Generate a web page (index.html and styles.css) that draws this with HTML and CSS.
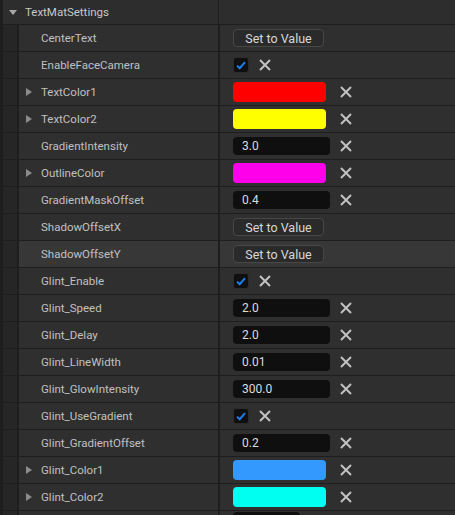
FILE: index.html
```html
<!DOCTYPE html>
<html lang="en">
<head>
  <meta charset="UTF-8">
  <title>TextMatSettings</title>
  <link rel="stylesheet" href="styles.css">
</head>
<body>
  <div class="panel">
    <div class="header">
      <div class="header-name"><span class="caret-down"></span>TextMatSettings</div>
      <div class="header-value"></div>
    </div>

    <div class="row">
      <div class="strip"></div>
      <div class="name"><span class="spacer"></span>CenterText</div>
      <div class="value"><button class="set-btn">Set to Value</button></div>
    </div>

    <div class="row">
      <div class="strip"></div>
      <div class="name"><span class="spacer"></span>EnableFaceCamera</div>
      <div class="value">
        <span class="check"><svg width="16" height="16" viewBox="0 0 16 16"><path d="M4 8.6L6.7 11.2L12 5.2" fill="none" stroke="#1f7fe8" stroke-width="2"/></svg></span>
        <span class="reset near"><svg width="12" height="12" viewBox="0 0 12 12"><path d="M1 1L11 11M11 1L1 11" stroke="#c2c2c2" stroke-width="2"/></svg></span>
      </div>
    </div>

    <div class="row">
      <div class="strip"></div>
      <div class="name"><span class="spacer"><span class="caret-right"></span></span>TextColor1</div>
      <div class="value">
        <span class="slot"><span class="swatch red"></span></span>
        <span class="reset"><svg width="12" height="12" viewBox="0 0 12 12"><path d="M1 1L11 11M11 1L1 11" stroke="#c2c2c2" stroke-width="2"/></svg></span>
      </div>
    </div>

    <div class="row">
      <div class="strip"></div>
      <div class="name"><span class="spacer"><span class="caret-right"></span></span>TextColor2</div>
      <div class="value">
        <span class="slot"><span class="swatch yellow"></span></span>
        <span class="reset"><svg width="12" height="12" viewBox="0 0 12 12"><path d="M1 1L11 11M11 1L1 11" stroke="#c2c2c2" stroke-width="2"/></svg></span>
      </div>
    </div>

    <div class="row">
      <div class="strip"></div>
      <div class="name"><span class="spacer"></span>GradientIntensity</div>
      <div class="value">
        <span class="slot"><span class="num">3.0</span></span>
        <span class="reset"><svg width="12" height="12" viewBox="0 0 12 12"><path d="M1 1L11 11M11 1L1 11" stroke="#c2c2c2" stroke-width="2"/></svg></span>
      </div>
    </div>

    <div class="row">
      <div class="strip"></div>
      <div class="name"><span class="spacer"><span class="caret-right"></span></span>OutlineColor</div>
      <div class="value">
        <span class="slot"><span class="swatch magenta"></span></span>
        <span class="reset"><svg width="12" height="12" viewBox="0 0 12 12"><path d="M1 1L11 11M11 1L1 11" stroke="#c2c2c2" stroke-width="2"/></svg></span>
      </div>
    </div>

    <div class="row">
      <div class="strip"></div>
      <div class="name"><span class="spacer"></span>GradientMaskOffset</div>
      <div class="value">
        <span class="slot"><span class="num">0.4</span></span>
        <span class="reset"><svg width="12" height="12" viewBox="0 0 12 12"><path d="M1 1L11 11M11 1L1 11" stroke="#c2c2c2" stroke-width="2"/></svg></span>
      </div>
    </div>

    <div class="row">
      <div class="strip"></div>
      <div class="name"><span class="spacer"></span>ShadowOffsetX</div>
      <div class="value"><button class="set-btn">Set to Value</button></div>
    </div>

    <div class="row hover">
      <div class="strip"></div>
      <div class="name"><span class="spacer"></span>ShadowOffsetY</div>
      <div class="value"><button class="set-btn">Set to Value</button></div>
    </div>

    <div class="row">
      <div class="strip"></div>
      <div class="name"><span class="spacer"></span>Glint_Enable</div>
      <div class="value">
        <span class="check"><svg width="16" height="16" viewBox="0 0 16 16"><path d="M4 8.6L6.7 11.2L12 5.2" fill="none" stroke="#1f7fe8" stroke-width="2"/></svg></span>
        <span class="reset near"><svg width="12" height="12" viewBox="0 0 12 12"><path d="M1 1L11 11M11 1L1 11" stroke="#c2c2c2" stroke-width="2"/></svg></span>
      </div>
    </div>

    <div class="row">
      <div class="strip"></div>
      <div class="name"><span class="spacer"></span>Glint_Speed</div>
      <div class="value">
        <span class="slot"><span class="num">2.0</span></span>
        <span class="reset"><svg width="12" height="12" viewBox="0 0 12 12"><path d="M1 1L11 11M11 1L1 11" stroke="#c2c2c2" stroke-width="2"/></svg></span>
      </div>
    </div>

    <div class="row">
      <div class="strip"></div>
      <div class="name"><span class="spacer"></span>Glint_Delay</div>
      <div class="value">
        <span class="slot"><span class="num">2.0</span></span>
        <span class="reset"><svg width="12" height="12" viewBox="0 0 12 12"><path d="M1 1L11 11M11 1L1 11" stroke="#c2c2c2" stroke-width="2"/></svg></span>
      </div>
    </div>

    <div class="row">
      <div class="strip"></div>
      <div class="name"><span class="spacer"></span>Glint_LineWidth</div>
      <div class="value">
        <span class="slot"><span class="num">0.01</span></span>
        <span class="reset"><svg width="12" height="12" viewBox="0 0 12 12"><path d="M1 1L11 11M11 1L1 11" stroke="#c2c2c2" stroke-width="2"/></svg></span>
      </div>
    </div>

    <div class="row">
      <div class="strip"></div>
      <div class="name"><span class="spacer"></span>Glint_GlowIntensity</div>
      <div class="value">
        <span class="slot"><span class="num">300.0</span></span>
        <span class="reset"><svg width="12" height="12" viewBox="0 0 12 12"><path d="M1 1L11 11M11 1L1 11" stroke="#c2c2c2" stroke-width="2"/></svg></span>
      </div>
    </div>

    <div class="row">
      <div class="strip"></div>
      <div class="name"><span class="spacer"></span>Glint_UseGradient</div>
      <div class="value">
        <span class="check"><svg width="16" height="16" viewBox="0 0 16 16"><path d="M4 8.6L6.7 11.2L12 5.2" fill="none" stroke="#1f7fe8" stroke-width="2"/></svg></span>
        <span class="reset near"><svg width="12" height="12" viewBox="0 0 12 12"><path d="M1 1L11 11M11 1L1 11" stroke="#c2c2c2" stroke-width="2"/></svg></span>
      </div>
    </div>

    <div class="row">
      <div class="strip"></div>
      <div class="name"><span class="spacer"></span>Glint_GradientOffset</div>
      <div class="value">
        <span class="slot"><span class="num">0.2</span></span>
        <span class="reset"><svg width="12" height="12" viewBox="0 0 12 12"><path d="M1 1L11 11M11 1L1 11" stroke="#c2c2c2" stroke-width="2"/></svg></span>
      </div>
    </div>

    <div class="row">
      <div class="strip"></div>
      <div class="name"><span class="spacer"><span class="caret-right"></span></span>Glint_Color1</div>
      <div class="value">
        <span class="slot"><span class="swatch blue"></span></span>
        <span class="reset"><svg width="12" height="12" viewBox="0 0 12 12"><path d="M1 1L11 11M11 1L1 11" stroke="#c2c2c2" stroke-width="2"/></svg></span>
      </div>
    </div>

    <div class="row">
      <div class="strip"></div>
      <div class="name"><span class="spacer"><span class="caret-right"></span></span>Glint_Color2</div>
      <div class="value">
        <span class="slot"><span class="swatch cyan"></span></span>
        <span class="reset"><svg width="12" height="12" viewBox="0 0 12 12"><path d="M1 1L11 11M11 1L1 11" stroke="#c2c2c2" stroke-width="2"/></svg></span>
      </div>
    </div>

    <div class="row partial">
      <div class="strip"></div>
      <div class="name"></div>
      <div class="value"><span class="num short"></span></div>
    </div>
  </div>
</body>
</html>
```

FILE: styles.css
```css
html, body {
  margin: 0;
  padding: 0;
  height: 100%;
  overflow: hidden;
  background-color: #1e1e1e;
}

body {
  font-family: Roboto, "Liberation Sans", sans-serif;
  font-size: 11.5px;
  color: #c0c0c0;
}

.panel {
  display: flex;
  flex-direction: column;
  gap: 1px;
  padding-left: 3px;
}

/* category header */
.header {
  display: grid;
  grid-template-columns: 215px 1fr;
  column-gap: 1px;
  height: 24px;
}

.header-name,
.header-value {
  background-color: #2d2d2d;
}

.header-name {
  display: flex;
  align-items: center;
  padding-left: 6px;
  color: #c8c8c8;
}

.caret-down {
  width: 0;
  height: 0;
  border-left: 4px solid transparent;
  border-right: 4px solid transparent;
  border-top: 5px solid #a8a8a8;
  margin-right: 8px;
  margin-top: 1px;
}

/* property rows */
.row {
  display: grid;
  grid-template-columns: 14px 199px 1fr;
  column-gap: 2px;
  height: 26px;
  flex-shrink: 0;
}

.strip {
  background-color: #262626;
}

.name,
.value {
  display: flex;
  align-items: center;
  background-color: #2f2f2f;
}

.row.hover .name,
.row.hover .value {
  background-color: #373737;
}

.name {
  padding-left: 7px;
}

.spacer {
  display: inline-flex;
  align-items: center;
  width: 15px;
  height: 100%;
}

.caret-right {
  width: 0;
  height: 0;
  border-top: 4.5px solid transparent;
  border-bottom: 4.5px solid transparent;
  border-left: 6px solid #8c8c8c;
}

.value {
  padding-left: 13px;
}

.set-btn {
  width: 91px;
  height: 18px;
  padding: 0;
  border: 1px solid #474747;
  border-radius: 4px;
  background-color: #2a2a2a;
  color: #d8d8d8;
  font-family: inherit;
  font-size: 12.5px;
}

.check {
  display: inline-flex;
  width: 16px;
  height: 16px;
  box-sizing: border-box;
  border: 1px solid #2c2c2c;
  border-radius: 3px;
  background-color: #0f0f0f;
}

.check svg {
  margin: -1px;
}

.slot {
  display: inline-flex;
  align-items: center;
  width: 97px;
  height: 100%;
}

.swatch {
  width: 93px;
  height: 20px;
  border-radius: 4px;
}

.swatch.red { background-color: #ff0000; }
.swatch.yellow { background-color: #ffff00; }
.swatch.magenta { background-color: #ff00ea; }
.swatch.blue { background-color: #3399ff; }
.swatch.cyan { background-color: #00fff0; }

.num {
  display: flex;
  align-items: center;
  box-sizing: border-box;
  width: 97px;
  height: 18px;
  padding-left: 9px;
  border-radius: 4px;
  background-color: #0f0f0f;
  color: #dcdcdc;
  font-size: 12px;
}

.num.short {
  width: 67px;
  align-self: flex-start;
  margin-top: 1px;
}

.reset {
  display: inline-flex;
  margin-left: 10px;
}
```
